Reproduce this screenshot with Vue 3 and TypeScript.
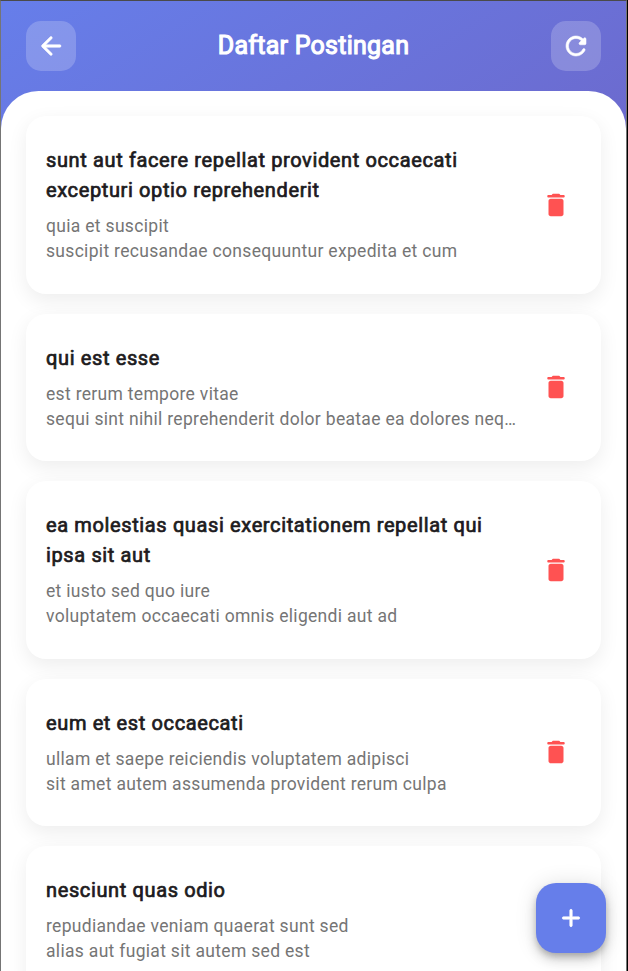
<script setup lang="ts">
interface Post {
  id: number
  title: string
  body: string[]
}

const posts: Post[] = [
  {
    id: 1,
    title: 'sunt aut facere repellat provident occaecati excepturi optio reprehenderit',
    body: ['quia et suscipit', 'suscipit recusandae consequuntur expedita et cum'],
  },
  {
    id: 2,
    title: 'qui est esse',
    body: ['est rerum tempore vitae', 'sequi sint nihil reprehenderit dolor beatae ea dolores neq…'],
  },
  {
    id: 3,
    title: 'ea molestias quasi exercitationem repellat qui ipsa sit aut',
    body: ['et iusto sed quo iure', 'voluptatem occaecati omnis eligendi aut ad'],
  },
  {
    id: 4,
    title: 'eum et est occaecati',
    body: ['ullam et saepe reiciendis voluptatem adipisci', 'sit amet autem assumenda provident rerum culpa'],
  },
  {
    id: 5,
    title: 'nesciunt quas odio',
    body: ['repudiandae veniam quaerat sunt sed', 'alias aut fugiat sit autem sed est'],
  },
]
</script>

<template>
  <div class="window">
    <main class="screen">
      <header class="header">
        <button class="header-button" aria-label="Kembali">
          <svg class="icon bold" viewBox="0 0 24 24">
            <path d="M19 11H7.83l4.88-4.88c.39-.39.39-1.03 0-1.42-.39-.39-1.02-.39-1.41 0l-6.59 6.59c-.39.39-.39 1.02 0 1.41l6.59 6.59c.39.39 1.02.39 1.41 0 .39-.39.39-1.02 0-1.41L7.83 13H19c.55 0 1-.45 1-1s-.45-1-1-1z" />
          </svg>
        </button>
        <h1 class="heading">Daftar Postingan</h1>
        <button class="header-button" aria-label="Muat ulang">
          <svg class="icon bold" viewBox="0 0 24 24">
            <path d="M17.65 6.35c-1.63-1.63-3.94-2.57-6.48-2.31-3.67.37-6.69 3.35-7.1 7.02C3.52 15.91 7.27 20 12 20c3.19 0 5.93-1.87 7.21-4.56.32-.67-.16-1.44-.9-1.44-.37 0-.72.2-.88.53-1.13 2.43-3.84 3.97-6.8 3.31-2.22-.49-4.01-2.3-4.48-4.52C5.31 9.44 8.26 6 12 6c1.66 0 3.14.69 4.22 1.78l-1.51 1.51c-.63.63-.19 1.71.7 1.71H19c.55 0 1-.45 1-1V6.41c0-.89-1.08-1.34-1.71-.71l-.64.65z" />
          </svg>
        </button>
      </header>

      <section class="panel">
        <article v-for="post in posts" :key="post.id" class="card">
          <div class="content">
            <h2 class="title">{{ post.title }}</h2>
            <p v-for="line in post.body" :key="line" class="line">{{ line }}</p>
          </div>
          <button class="delete" aria-label="Hapus">
            <svg class="icon" viewBox="0 0 24 24">
              <path d="M6 19.2c0 1 .8 1.8 1.8 1.8h8.4c1 0 1.8-.8 1.8-1.8V8.8c0-1-.8-1.8-1.8-1.8H7.8C6.8 7 6 7.8 6 8.8v10.4zM18 4h-2.5l-.71-.71c-.18-.18-.44-.29-.7-.29H9.91c-.26 0-.52.11-.7.29L8.5 4H6c-.55 0-1 .45-1 1s.45 1 1 1h12c.55 0 1-.45 1-1s-.45-1-1-1z" />
            </svg>
          </button>
        </article>
      </section>

      <button class="fab" aria-label="Tambah">
        <svg class="icon bold" viewBox="0 0 24 24">
          <path d="M18 13h-5v5c0 .55-.45 1-1 1s-1-.45-1-1v-5H6c-.55 0-1-.45-1-1s.45-1 1-1h5V6c0-.55.45-1 1-1s1 .45 1 1v5h5c.55 0 1 .45 1 1s-.45 1-1 1z" />
        </svg>
      </button>
    </main>
  </div>
</template>

<style>
body {
  margin: 0;
  background: #000;
}
</style>

<style scoped>
.window {
  box-sizing: border-box;
  width: 627px;
  height: 971px;
  border: 1px solid #757575;
  border-top-color: #4a4a4a;
  border-bottom: 0;
  font-family: Roboto, 'Liberation Sans', sans-serif;
}

.screen {
  position: relative;
  display: flex;
  flex-direction: column;
  height: 970px;
  overflow: hidden;
  background: linear-gradient(147.2deg, #667eea, #764ba2);
}

button {
  display: flex;
  align-items: center;
  justify-content: center;
  flex: none;
  padding: 0;
  border: 0;
}

.icon {
  width: 30px;
  height: 30px;
  fill: currentColor;
}

.bold {
  stroke: currentColor;
  stroke-width: 0.45;
}

.header {
  display: flex;
  align-items: center;
  flex: none;
  height: 90px;
  padding: 0 25px;
  box-sizing: border-box;
}

.header-button {
  width: 50px;
  height: 50px;
  border-radius: 15px;
  background: rgba(255, 255, 255, 0.2);
  color: #fff;
}

.heading {
  flex: 1;
  margin: 0;
  font-size: 25px;
  font-weight: 400;
  line-height: 30px;
  letter-spacing: 0.25px;
  text-align: center;
  color: #fff;
  -webkit-text-stroke: 1.1px #fff;
}

.panel {
  display: flex;
  flex-direction: column;
  flex: 1;
  gap: 20px;
  min-height: 0;
  padding: 25px 25px 0;
  overflow: hidden;
  border-radius: 37.5px 37.5px 0 0;
  background: #fff;
}

.card {
  display: flex;
  align-items: center;
  flex: none;
  padding: 29.25px 20px;
  border-radius: 20px;
  background: #fff;
  box-shadow: 0 6.25px 20px rgba(0, 0, 0, 0.07);
}

.content {
  flex: 1;
  min-width: 0;
  padding-right: 8px;
}

.title {
  margin: 0 0 9px;
  font-size: 20px;
  font-weight: 400;
  line-height: 30px;
  letter-spacing: 0.625px;
  color: #1d1b20;
  -webkit-text-stroke: 0.7px #1d1b20;
}

.line {
  margin: 0;
  font-size: 17.5px;
  line-height: 25px;
  letter-spacing: 0.3125px;
  white-space: nowrap;
  color: #757575;
}

.delete {
  width: 50px;
  height: 50px;
  background: none;
  color: #ff5252;
}

.fab {
  position: absolute;
  right: 20px;
  bottom: 18px;
  width: 70px;
  height: 70px;
  border-radius: 20px;
  background: #667eea;
  color: #fff;
  box-shadow: 0 4px 6px -1px rgba(0, 0, 0, 0.2), 0 7px 12px rgba(0, 0, 0, 0.14), 0 1px 22px rgba(0, 0, 0, 0.12);
}
</style>
